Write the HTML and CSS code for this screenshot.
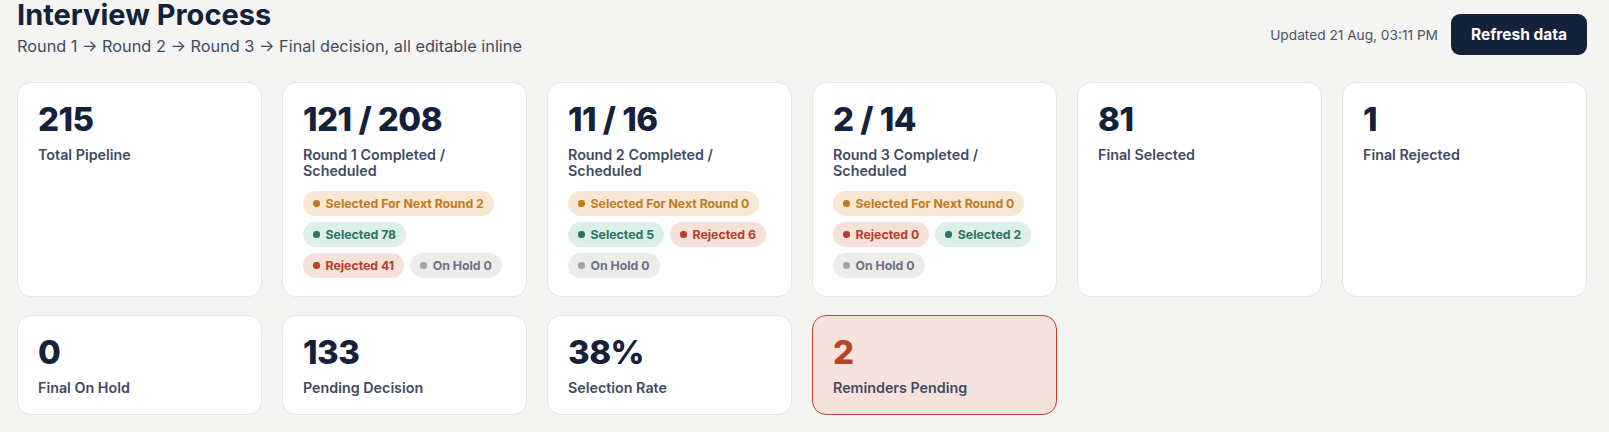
FILE: index.html
```html
<!DOCTYPE html>
<html lang="en">
<head>
<meta charset="utf-8">
<title>Interview Process</title>
<link rel="stylesheet" href="styles.css">
</head>
<body>
<div class="page">
  <header class="header">
    <div class="heading">
      <h1 class="title">Interview Process</h1>
      <p class="subtitle">Round 1 → Round 2 → Round 3 → Final decision, all editable inline</p>
    </div>
    <div class="actions">
      <span class="updated">Updated 21 Aug, 03:11 PM</span>
      <button class="btn">Refresh data</button>
    </div>
  </header>

  <section class="grid">
    <div class="card">
      <div class="num">215</div>
      <div class="label">Total Pipeline</div>
    </div>
    <div class="card">
      <div class="num">121 / 208</div>
      <div class="label">Round 1 Completed / Scheduled</div>
      <div class="pills">
        <span class="pill amber"><i class="dot"></i>Selected For Next Round 2</span>
        <span class="pill green"><i class="dot"></i>Selected 78</span>
        <span class="pill red"><i class="dot"></i>Rejected 41</span>
        <span class="pill grey"><i class="dot"></i>On Hold 0</span>
      </div>
    </div>
    <div class="card">
      <div class="num">11 / 16</div>
      <div class="label">Round 2 Completed / Scheduled</div>
      <div class="pills">
        <span class="pill amber"><i class="dot"></i>Selected For Next Round 0</span>
        <span class="pill green"><i class="dot"></i>Selected 5</span>
        <span class="pill red"><i class="dot"></i>Rejected 6</span>
        <span class="pill grey"><i class="dot"></i>On Hold 0</span>
      </div>
    </div>
    <div class="card">
      <div class="num">2 / 14</div>
      <div class="label">Round 3 Completed / Scheduled</div>
      <div class="pills">
        <span class="pill amber"><i class="dot"></i>Selected For Next Round 0</span>
        <span class="pill red"><i class="dot"></i>Rejected 0</span>
        <span class="pill green"><i class="dot"></i>Selected 2</span>
        <span class="pill grey"><i class="dot"></i>On Hold 0</span>
      </div>
    </div>
    <div class="card">
      <div class="num">81</div>
      <div class="label">Final Selected</div>
    </div>
    <div class="card">
      <div class="num">1</div>
      <div class="label">Final Rejected</div>
    </div>

    <div class="card">
      <div class="num">0</div>
      <div class="label">Final On Hold</div>
    </div>
    <div class="card">
      <div class="num">133</div>
      <div class="label">Pending Decision</div>
    </div>
    <div class="card">
      <div class="num">38%</div>
      <div class="label">Selection Rate</div>
    </div>
    <div class="card alert">
      <div class="num">2</div>
      <div class="label">Reminders Pending</div>
    </div>
  </section>
</div>
</body>
</html>
```

FILE: styles.css
```css
* { box-sizing: border-box; }

html, body {
  margin: 0;
  padding: 0;
  background: #f4f4f2;
}

body {
  font-family: Inter, "Noto Sans", "Liberation Sans", sans-serif;
  color: #13213b;
  overflow: hidden;
}

.page {
  width: 1609px;
  padding: 0 22px 0 17px;
}

.header {
  display: flex;
  justify-content: space-between;
  align-items: flex-start;
  margin-top: -2px;
}

.title {
  margin: 0;
  font-size: 29px;
  line-height: 34px;
  font-weight: 700;
  color: #13213b;
}

.subtitle {
  margin: 4px 0 0;
  font-size: 16.3px;
  line-height: 21px;
  color: #3f4b63;
}

.actions {
  display: flex;
  align-items: center;
  gap: 13px;
  margin-top: 16px;
}

.updated {
  font-size: 13.7px;
  color: #4a5568;
}

.btn {
  font-family: inherit;
  font-size: 15.5px;
  line-height: 19px;
  font-weight: 700;
  color: #ffffff;
  background: #13213b;
  border: none;
  border-radius: 9px;
  padding: 11px 0;
  width: 136px;
  cursor: pointer;
}

.grid {
  display: grid;
  grid-template-columns: repeat(6, 1fr);
  column-gap: 20px;
  row-gap: 18px;
  margin-top: 25px;
  align-items: stretch;
}

.card {
  background: #ffffff;
  border: 1px solid #e6e6e3;
  border-radius: 14px;
  padding: 19px 20px 18px;
}

.card.alert {
  background: #f6e2dc;
  border-color: #c0432c;
}

.num {
  font-size: 33px;
  line-height: 34px;
  font-weight: 800;
  letter-spacing: -0.5px;
  color: #13213b;
}

.alert .num {
  color: #b8432a;
}

.label {
  margin-top: 11px;
  font-size: 14.3px;
  line-height: 16px;
  font-weight: 600;
  color: #3f4b63;
}

.pills {
  display: flex;
  flex-wrap: wrap;
  gap: 6px;
  margin-top: 12px;
}

.pill {
  display: inline-flex;
  align-items: center;
  gap: 6px;
  height: 25px;
  padding: 0 10px;
  border-radius: 13px;
  font-size: 12.3px;
  font-weight: 700;
  white-space: nowrap;
}

.dot {
  width: 6.5px;
  height: 6.5px;
  border-radius: 50%;
  background: currentColor;
  display: inline-block;
}

.pill.amber { background: #f6e8d5; color: #c27a1e; }
.pill.green { background: #dcefe8; color: #2a7563; }
.pill.red   { background: #f6e0da; color: #b53e2a; }
.pill.grey  { background: #ecedea; color: #6b7282; }
.pill.grey .dot { background: #9ca3af; }
```
